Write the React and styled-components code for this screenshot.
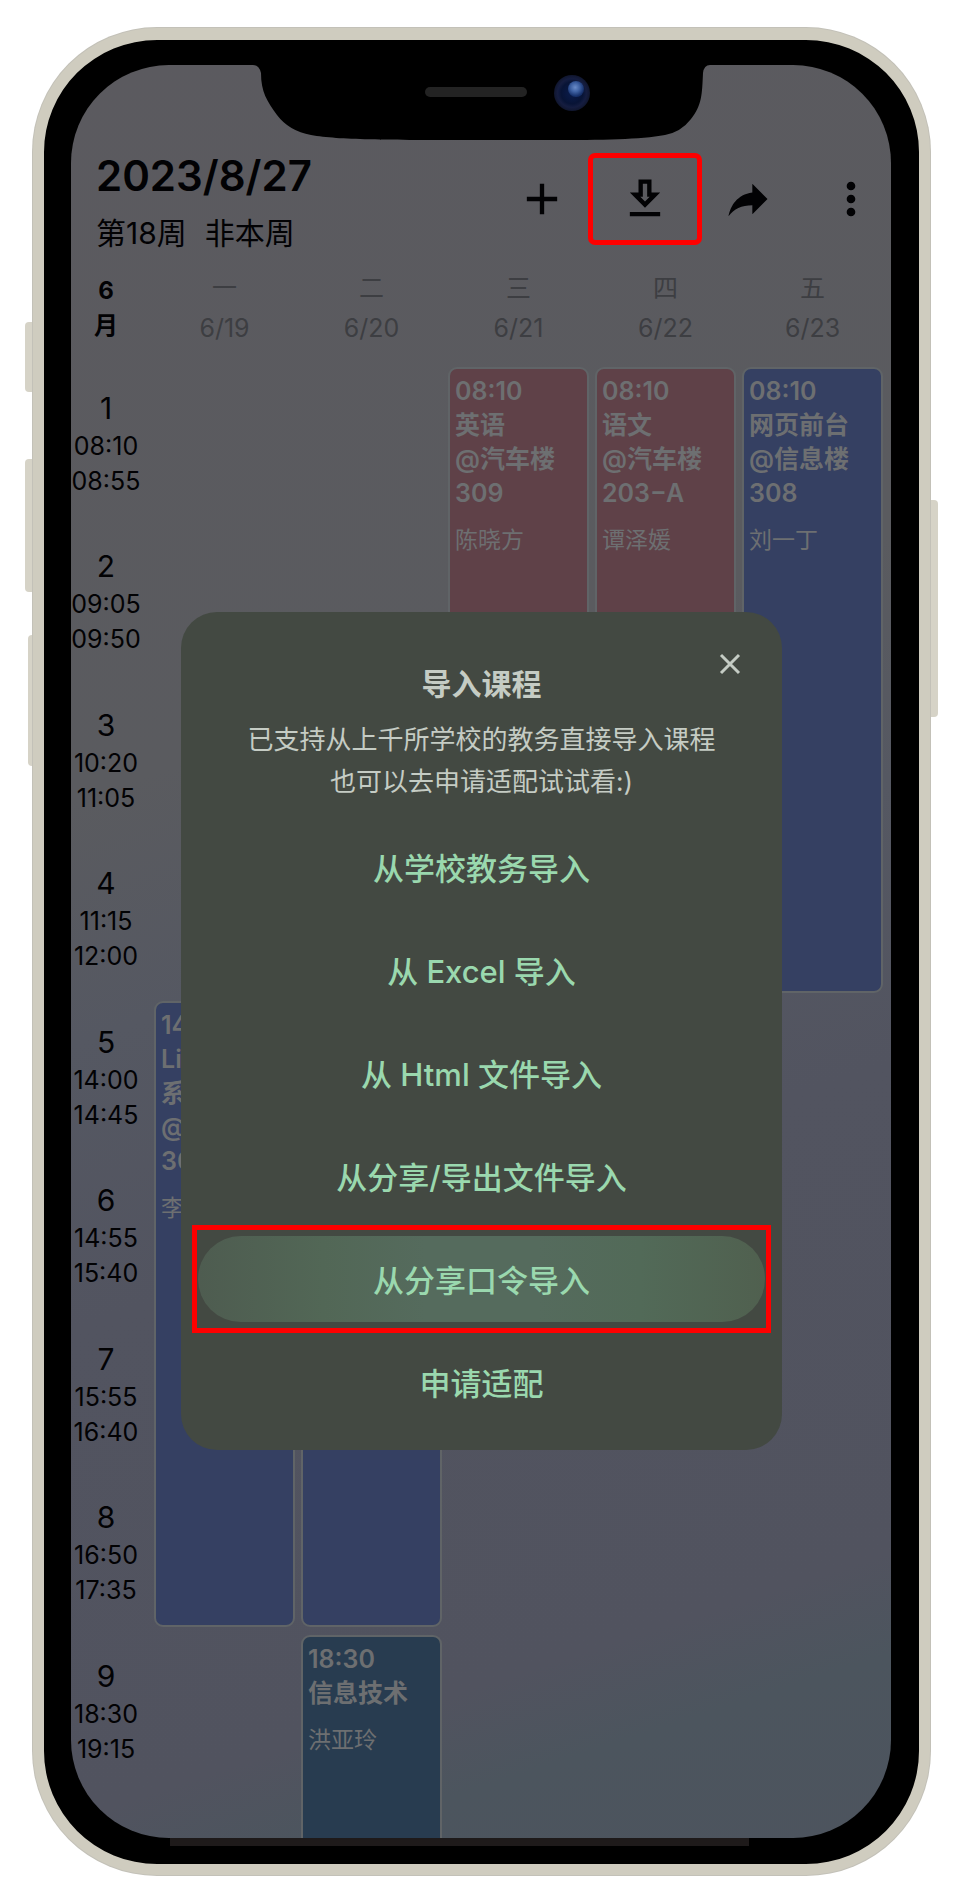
import React from "react";
import styled, { createGlobalStyle, css } from "styled-components";

const GlobalStyle = createGlobalStyle`
  * { box-sizing: border-box; }
  body {
    margin: 0;
    background: #fff;
    font-family: Inter, "Noto Sans CJK SC", sans-serif;
  }
  button {
    font: inherit;
    color: inherit;
    border: 0;
    padding: 0;
    margin: 0;
    background: none;
    cursor: pointer;
  }
  h1, h2, p { margin: 0; }
`;

const Page = styled.main`
  padding: 28px 50px 28px 33px;
`;

const Phone = styled.div`
  position: relative;
  padding: 25px 28px 26px 27px;
  background: #000;
  border: 11px solid #cfccbf;
  border-top-width: 12px;
  border-radius: 124px;
  box-shadow: 0 0 0 1px #c3c1b8;
`;

const SideButton = styled.span`
  position: absolute;
  top: ${(p) => p.$top}px;
  width: ${(p) => p.$width}px;
  height: ${(p) => p.$height}px;
  background: #d6d3c7;
  ${(p) =>
    p.$right
      ? css`left: calc(100% + 12px); border-radius: 0 4px 4px 0;`
      : css`right: calc(100% + 12px); border-radius: 4px 0 0 4px;`}
`;

const Screen = styled.div`
  position: relative;
  overflow: hidden;
  border-radius: 98px;
  color: #020204;
  background: linear-gradient(
    162deg,
    #5b5a5f 0%,
    #5a5b5f 36%,
    #555862 48%,
    #525460 62%,
    #51535f 86%,
    #4c555e 91%,
    #4d545e 100%
  );
`;

const NotchHolder = styled.div`
  position: absolute;
  top: 0;
  left: 27px;
  right: 28px;
`;

const NotchArt = styled.svg`
  position: absolute;
  top: 0;
  left: 50%;
  transform: translateX(-50%);
  display: block;
`;

const BottomSheen = styled.span`
  position: absolute;
  left: 126px;
  right: 170px;
  bottom: 18px;
  height: 8px;
  background: #1e1a1a;
`;

const Header = styled.header`
  display: flex;
  justify-content: space-between;
  align-items: flex-start;
  padding: 86px 0 0 25px;
`;

const Titles = styled.div`
  display: flex;
  flex-direction: column;
  gap: 12px;
`;

const DateTitle = styled.h1`
  font-size: 42px;
  line-height: 50px;
  font-weight: 600;
  white-space: nowrap;
`;

const WeekLine = styled.p`
  display: flex;
  gap: 18px;
  font-size: 30px;
  line-height: 40px;
  white-space: nowrap;
`;

const Toolbar = styled.div`
  display: flex;
  gap: 23px;
  padding-top: 2px;
`;

const ToolButton = styled.button`
  position: relative;
  display: flex;
  align-items: center;
  justify-content: center;
  width: 80px;
  height: 92px;

  ${(p) =>
    p.$marked &&
    css`
      &::after {
        content: "";
        position: absolute;
        inset: 0 -17px;
        border: 5px solid #fe0000;
        border-radius: 7px;
      }
    `}
`;

const columns = css`
  display: grid;
  grid-template-columns: 80px repeat(5, 1fr);
  padding-right: 5px;
`;

const WeekHeader = styled.div`
  ${columns}
  align-items: center;
  padding-top: 15px;
  padding-bottom: 15px;
`;

const Month = styled.div`
  display: flex;
  flex-direction: column;
  padding-right: 10px;
  text-align: center;
  font-size: 24px;
  line-height: 35px;
  font-weight: 700;
`;

const Day = styled.div`
  display: flex;
  flex-direction: column;
  text-align: center;
  font-size: 25px;
  line-height: 40px;
  color: #3d3e42;
`;

const Timetable = styled.div`
  ${columns}
  grid-template-rows: repeat(9, 1fr) 49px;
  min-height: 1475px;
`;

const Period = styled.div`
  grid-column: 1;
  grid-row: ${(p) => p.$row};
  display: flex;
  flex-direction: column;
  align-items: center;
  padding: 25px 10px 0 0;
  font-size: 25px;
  line-height: 35px;
`;

const PeriodNumber = styled.span`
  font-size: 30px;
  line-height: 41px;
`;

const Course = styled.article`
  grid-column: ${(p) => p.$day + 1};
  grid-row: ${(p) => p.$rows};
  display: flex;
  flex-direction: column;
  margin: 4px 3px ${(p) => (p.$open ? 0 : 4)}px;
  padding: 5px 5px 0;
  overflow: hidden;
  border: 2px solid #606467;
  border-bottom-width: ${(p) => (p.$open ? 0 : 2)}px;
  border-radius: ${(p) => (p.$open ? "9px 9px 0 0" : "9px")};
  background: ${(p) => p.$tone};
  color: #6d6f71;
  font-size: 25px;
  line-height: 34px;
  font-weight: 600;
  white-space: nowrap;
`;

const Teacher = styled.span`
  margin-top: 13px;
  font-size: 23px;
  font-weight: 400;
`;

const Dialog = styled.section`
  position: absolute;
  top: 547px;
  left: 110px;
  right: 109px;
  display: flex;
  flex-direction: column;
  align-items: center;
  padding: 51px 17px 25px;
  border-radius: 36px;
  background: #434942;
  color: #c5ccc4;
`;

const DialogTitle = styled.h2`
  font-size: 30px;
  line-height: 42px;
  font-weight: 600;
`;

const DialogText = styled.p`
  padding: 14px 0 21px;
  text-align: center;
  font-size: 26px;
  line-height: 42px;
  white-space: nowrap;
`;

const CloseButton = styled.button`
  position: absolute;
  top: 32px;
  right: 32px;
  display: flex;
  align-items: center;
  justify-content: center;
  width: 40px;
  height: 40px;
`;

const Options = styled.div`
  display: flex;
  flex-direction: column;
  gap: 17px;
  width: 100%;
`;

const Option = styled.button`
  position: relative;
  height: 86px;
  padding-bottom: 2px;
  border-radius: 43px;
  color: #9ad8ae;
  font-size: 31px;
  font-weight: 500;

  ${(p) =>
    p.$marked &&
    css`
      background: linear-gradient(
        90deg,
        #4e5c50 0%,
        #526756 22%,
        #556b5d 40%,
        #556b5d 60%,
        #526a58 78%,
        #50604f 100%
      );

      &::after {
        content: "";
        position: absolute;
        inset: -11px -6px;
        border: 5px solid #fe0000;
      }
    `}
`;

const toolIcons = [
  { label: "添加", d: "M19 13h-6v6h-2v-6H5v-2h6V5h2v6h6v2z" },
  {
    label: "导入",
    marked: true,
    d: "M19 9h-4V3H9v6H5l7 7 7-7zm-8 2V5h2v6h1.17L12 13.17 9.83 11H11zm-6 7h14v2H5v-2z",
  },
  {
    label: "分享",
    d: "M21 12l-7-7v4C7 10 4 15 3 20c2.500-3.500 6-5.100 11-5.100V19l7-7z",
  },
  {
    label: "更多",
    d: "M12 8c1.100 0 2-.9 2-2s-.9-2-2-2-2 .9-2 2 .9 2 2 2zm0 2c-1.100 0-2 .9-2 2s.9 2 2 2 2-.9 2-2-.9-2-2-2zm0 6c-1.100 0-2 .9-2 2s.9 2 2 2 2-.9 2-2-.9-2-2-2z",
  },
];

const days = [
  ["一", "6/19"],
  ["二", "6/20"],
  ["三", "6/21"],
  ["四", "6/22"],
  ["五", "6/23"],
];

const periods = [
  ["08:10", "08:55"],
  ["09:05", "09:50"],
  ["10:20", "11:05"],
  ["11:15", "12:00"],
  ["14:00", "14:45"],
  ["14:55", "15:40"],
  ["15:55", "16:40"],
  ["16:50", "17:35"],
  ["18:30", "19:15"],
];

const RED = "#5f4148";
const BLUE = "#354062";
const TEAL = "#283c50";

const courses = [
  { day: 1, rows: "5 / 9", tone: BLUE, lines: ["14:00", "Linux", "系统", "@信息楼", "308"], teacher: "李" },
  { day: 2, rows: "5 / 9", tone: BLUE, lines: [] },
  { day: 2, rows: "9 / 11", tone: TEAL, open: true, lines: ["18:30", "信息技术"], teacher: "洪亚玲" },
  { day: 3, rows: "1 / 3", tone: RED, lines: ["08:10", "英语", "@汽车楼", "309"], teacher: "陈晓方" },
  { day: 4, rows: "1 / 3", tone: RED, lines: ["08:10", "语文", "@汽车楼", "203−A"], teacher: "谭泽媛" },
  { day: 5, rows: "1 / 5", tone: BLUE, lines: ["08:10", "网页前台", "@信息楼", "308"], teacher: "刘一丁" },
];

const options = [
  { label: "从学校教务导入" },
  { label: "从 Excel 导入" },
  { label: "从 Html 文件导入" },
  { label: "从分享/导出文件导入" },
  { label: "从分享口令导入", marked: true },
  { label: "申请适配" },
];

function Notch() {
  return (
    <NotchArt width="460" height="104" viewBox="0 0 460 104" aria-hidden="true">
      <defs>
        <radialGradient id="lens" cx="50%" cy="50%" r="50%">
          <stop offset="0" stopColor="#0a1c4c" />
          <stop offset="0.6" stopColor="#081436" />
          <stop offset="0.8" stopColor="#151d40" />
          <stop offset="1" stopColor="#10162e" />
        </radialGradient>
        <radialGradient id="glint" cx="45%" cy="40%" r="55%">
          <stop offset="0" stopColor="#6a8bc8" />
          <stop offset="0.5" stopColor="#3f62a3" />
          <stop offset="1" stopColor="#16306a" />
        </radialGradient>
      </defs>
      <path
        d="M0 0H460V25H459Q453 25 452 33C451 55 451 65 440 79Q430 92 414 95C380 101 330 100 230 100C130 100 90 100 60 95Q38 91 26 75C16 61 10 52 10 33Q8 25 2 25H0Z"
        fill="#000"
      />
      <rect x="174" y="47" width="102" height="10" rx="5" fill="#232323" />
      <circle cx="321" cy="53" r="18" fill="url(#lens)" />
      <circle cx="325" cy="49" r="8" fill="url(#glint)" />
    </NotchArt>
  );
}

export default function App() {
  return (
    <>
      <GlobalStyle />
      <Page>
        <Phone>
          <SideButton $top={282} $width={7} $height={70} />
          <SideButton $top={419} $width={7} $height={133} />
          <SideButton $top={595} $width={4} $height={131} />
          <SideButton $right $top={460} $width={7} $height={217} />
          <BottomSheen />
          <Screen>
            <Header>
              <Titles>
                <DateTitle>2023/8/27</DateTitle>
                <WeekLine>
                  <span>第18周</span>
                  <span>非本周</span>
                </WeekLine>
              </Titles>
              <Toolbar>
                {toolIcons.map((t) => (
                  <ToolButton key={t.label} aria-label={t.label} $marked={t.marked}>
                    <svg width="52" height="52" viewBox="0 0 24 24" fill="currentColor">
                      <path d={t.d} />
                    </svg>
                  </ToolButton>
                ))}
              </Toolbar>
            </Header>

            <WeekHeader>
              <Month>
                <span>6</span>
                <span>月</span>
              </Month>
              {days.map(([name, date]) => (
                <Day key={date}>
                  <span>{name}</span>
                  <span>{date}</span>
                </Day>
              ))}
            </WeekHeader>

            <Timetable>
              {periods.map(([from, to], i) => (
                <Period key={from} $row={i + 1}>
                  <PeriodNumber>{i + 1}</PeriodNumber>
                  <time>{from}</time>
                  <time>{to}</time>
                </Period>
              ))}
              {courses.map((c) => (
                <Course
                  key={c.day + c.rows}
                  $day={c.day}
                  $rows={c.rows}
                  $tone={c.tone}
                  $open={c.open}
                >
                  {c.lines.map((line) => (
                    <span key={line}>{line}</span>
                  ))}
                  {c.teacher && <Teacher>{c.teacher}</Teacher>}
                </Course>
              ))}
            </Timetable>

            <Dialog role="dialog" aria-labelledby="import-title">
              <CloseButton aria-label="关闭">
                <svg width="22" height="22" viewBox="0 0 22 22" fill="none" stroke="currentColor" strokeWidth="3">
                  <path d="M2 2L20 20M20 2L2 20" />
                </svg>
              </CloseButton>
              <DialogTitle id="import-title">导入课程</DialogTitle>
              <DialogText>
                已支持从上千所学校的教务直接导入课程
                <br />
                也可以去申请适配试试看:)
              </DialogText>
              <Options>
                {options.map((o) => (
                  <Option key={o.label} $marked={o.marked}>
                    {o.label}
                  </Option>
                ))}
              </Options>
            </Dialog>
          </Screen>
          <NotchHolder>
            <Notch />
          </NotchHolder>
        </Phone>
      </Page>
    </>
  );
}
